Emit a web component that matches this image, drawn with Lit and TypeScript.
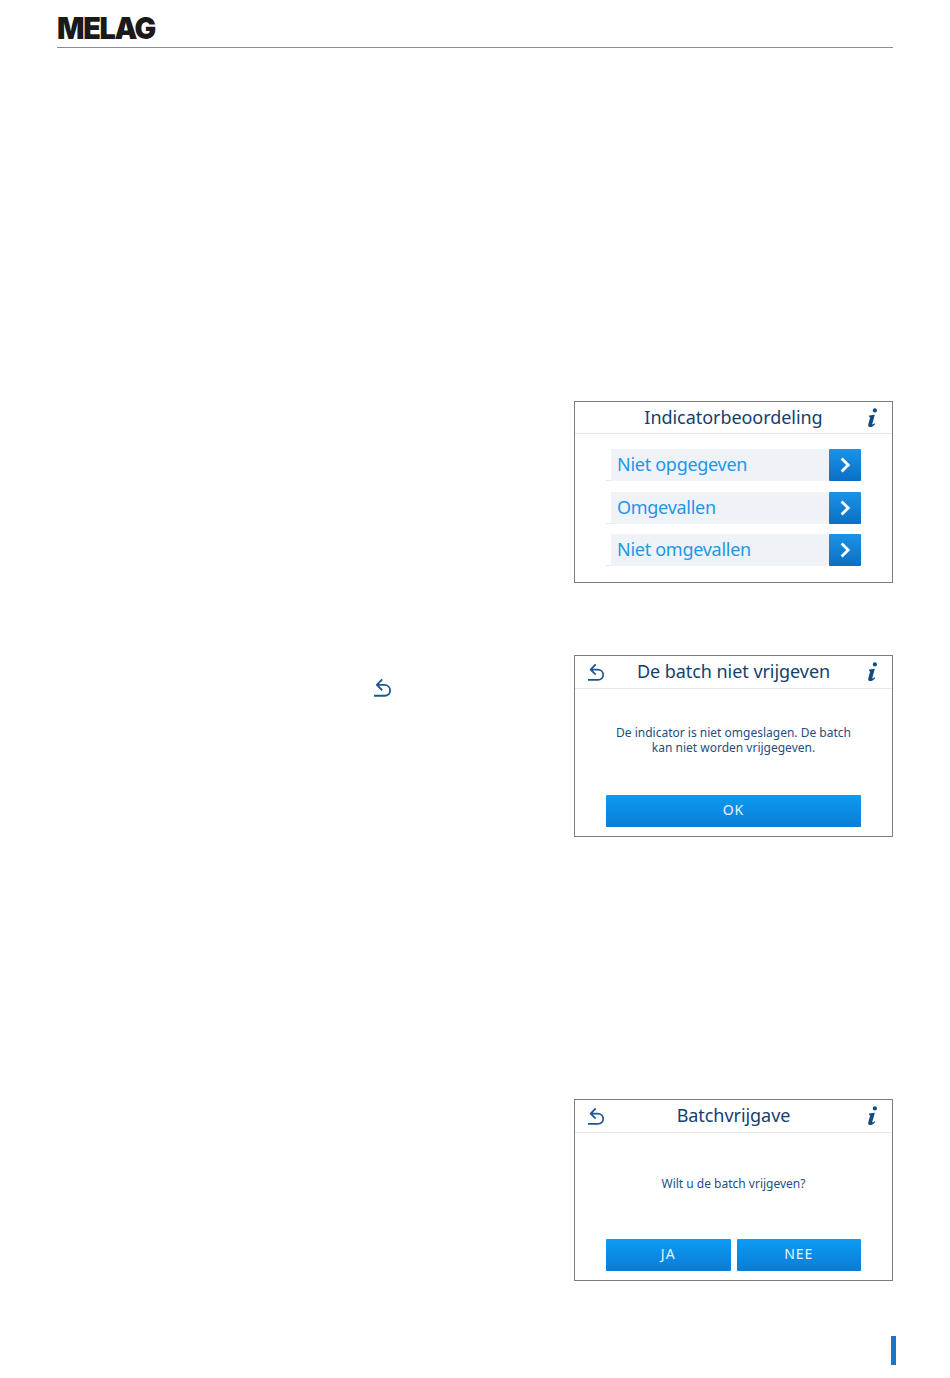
import { LitElement, html, css, svg } from "lit";
import { customElement } from "lit/decorators.js";

const back = svg`<path d="M8.7 1.3 L3.6 6.6 L8.7 11.6 M3.8 6.6 H10.6 C14 6.6 16.2 9 16.2 11.8 C16.2 14.8 14 16.8 11 16.8 H1" fill="none" stroke="#1c5590" stroke-width="1.7" stroke-linejoin="round"/>`;
const backIcon = html`<svg class="back" viewBox="0 0 18 18">${back}</svg>`;
const infoIcon = html`<svg class="info" viewBox="0 0 12 22"><circle cx="8.6" cy="2.7" r="2.3" fill="#0f4c81"/><path d="M2.4 8.2 L8.6 7.4 L5.8 17.2 C5.5 18.3 6.4 18.4 8.4 16.9 L8.9 17.9 C6.6 20.6 4.6 21.2 2.9 21 C1.3 20.7 1 19.6 1.4 18 L3.4 10.4 L2.2 9.8 Z" fill="#0f4c81"/></svg>`;
const chevron = html`<svg class="chev" viewBox="0 0 12 16"><path d="M2.6 1.6 L9.2 8 L2.6 14.4" fill="none" stroke="#fff" stroke-width="2.8"/></svg>`;

@customElement("app-root")
export class AppRoot extends LitElement {
  static styles = css`
    :host { display: block; width: 950px; height: 1378px; background: #fff; overflow: hidden;
      font-family: "Noto Sans", "Open Sans", sans-serif; }
    .page { height: 1378px; padding: 0 57px; box-sizing: border-box; display: flex; flex-direction: column; }
    .head { height: 47px; border-bottom: 1px solid #8c8c8c; flex: none; display: flex; align-items: flex-start; }
    .logo { font-family: "Inter", "Liberation Sans", sans-serif; font-weight: 900; font-size: 30px; line-height: 24px;
      margin-top: 16px; letter-spacing: -1.4px; color: #1a1a1a; transform-origin: left top; transform: scaleX(0.96); }
    .sec { display: flex; justify-content: flex-end; align-items: flex-start; }
    .s1 { margin-top: 353px; }
    .s2 { margin-top: 72px; justify-content: space-between; }
    .s3 { margin-top: 262px; }
    .inline-back { margin: 23px 0 0 316px; width: 19px; height: 19px; display: block; }
    .panel { width: 319px; height: 182px; box-sizing: border-box; border: 1px solid #7d7d7d; background: #fff;
      display: flex; flex-direction: column; flex: none; }
    .bar { height: 32px; flex: none; border-bottom: 1px solid #e4e6ea; display: grid;
      grid-template-columns: 42px 1fr 42px; align-items: center; color: #14406f; }
    .bar.short { height: 31px; }
    .title { text-align: center; font-size: 18px; line-height: 30px; padding-bottom: 2px; letter-spacing: -0.05px; }
    .back { width: 18px; height: 18px; display: block; margin-left: 12px; }
    .info { width: 11px; height: 20px; display: block; margin-left: 17px; }
    .list { display: flex; flex-direction: column; gap: 10.5px; padding: 15px 31px 0 31px; }
    .row { height: 32px; display: flex; justify-content: space-between; background: linear-gradient(#eff2f7, #eff2f7) 5px 0 / calc(100% - 5px) 100% no-repeat;
      position: relative; }
    .row::after { content: ""; position: absolute; left: 0; bottom: 0; width: 6px; height: 1px; background: #e4e8ef; }
    .row span { font-size: 18px; line-height: 30px; color: #1f96e6; padding-left: 11px; letter-spacing: -0.28px; }
    .go { width: 32px; height: 32px; background: linear-gradient(#1c93e6, #0a6fc4); display: flex; align-items: center;
      justify-content: center; border-radius: 1px; }
    .chev { width: 12px; height: 16px; display: block; }
    .msg { flex: 1; display: flex; align-items: center; justify-content: center; text-align: center; font-size: 12px;
      line-height: 15px; color: #1c4f80; padding-bottom: 4px; }
    .msg.single { padding-bottom: 6px; }
    .btns { display: flex; gap: 6px; padding: 0 31px 9px; }
    .btn { flex: 1; height: 32px; background: linear-gradient(#0d9bf3, #0a7cd4); color: #e6f4fd; font-size: 14px;
      line-height: 30px; text-align: center; letter-spacing: 1px; border-radius: 1px; }
    .marker { position: absolute; left: 891px; top: 1336px; width: 5px; height: 29px; background: #1b74c5; }
  `;

  private panel(title: string, hasBack: boolean, body: unknown, short = false) {
    return html`<div class="panel">
      <div class="bar ${short ? "short" : ""}"><div>${hasBack ? backIcon : ""}</div><div class="title">${title}</div><div>${infoIcon}</div></div>
      ${body}
    </div>`;
  }

  render() {
    const rows = ["Niet opgegeven", "Omgevallen", "Niet omgevallen"];
    return html`<div class="page">
      <div class="head"><div class="logo">MELAG</div></div>
      <div class="sec s1">
        ${this.panel("Indicatorbeoordeling", false, html`<div class="list">
          ${rows.map((r) => html`<div class="row"><span>${r}</span><div class="go">${chevron}</div></div>`)}
        </div>`, true)}
      </div>
      <div class="sec s2">
        <svg class="inline-back" viewBox="0 0 18 18">${back}</svg>
        ${this.panel("De batch niet vrijgeven", true, html`
          <div class="msg"><div>De indicator is niet omgeslagen. De batch<br />kan niet worden vrijgegeven.</div></div>
          <div class="btns"><div class="btn">OK</div></div>`)}
      </div>
      <div class="sec s3">
        ${this.panel("Batchvrijgave", true, html`
          <div class="msg single"><div>Wilt u de batch vrijgeven?</div></div>
          <div class="btns"><div class="btn">JA</div><div class="btn">NEE</div></div>`)}
      </div>
      <div class="marker"></div>
    </div>`;
  }
}
